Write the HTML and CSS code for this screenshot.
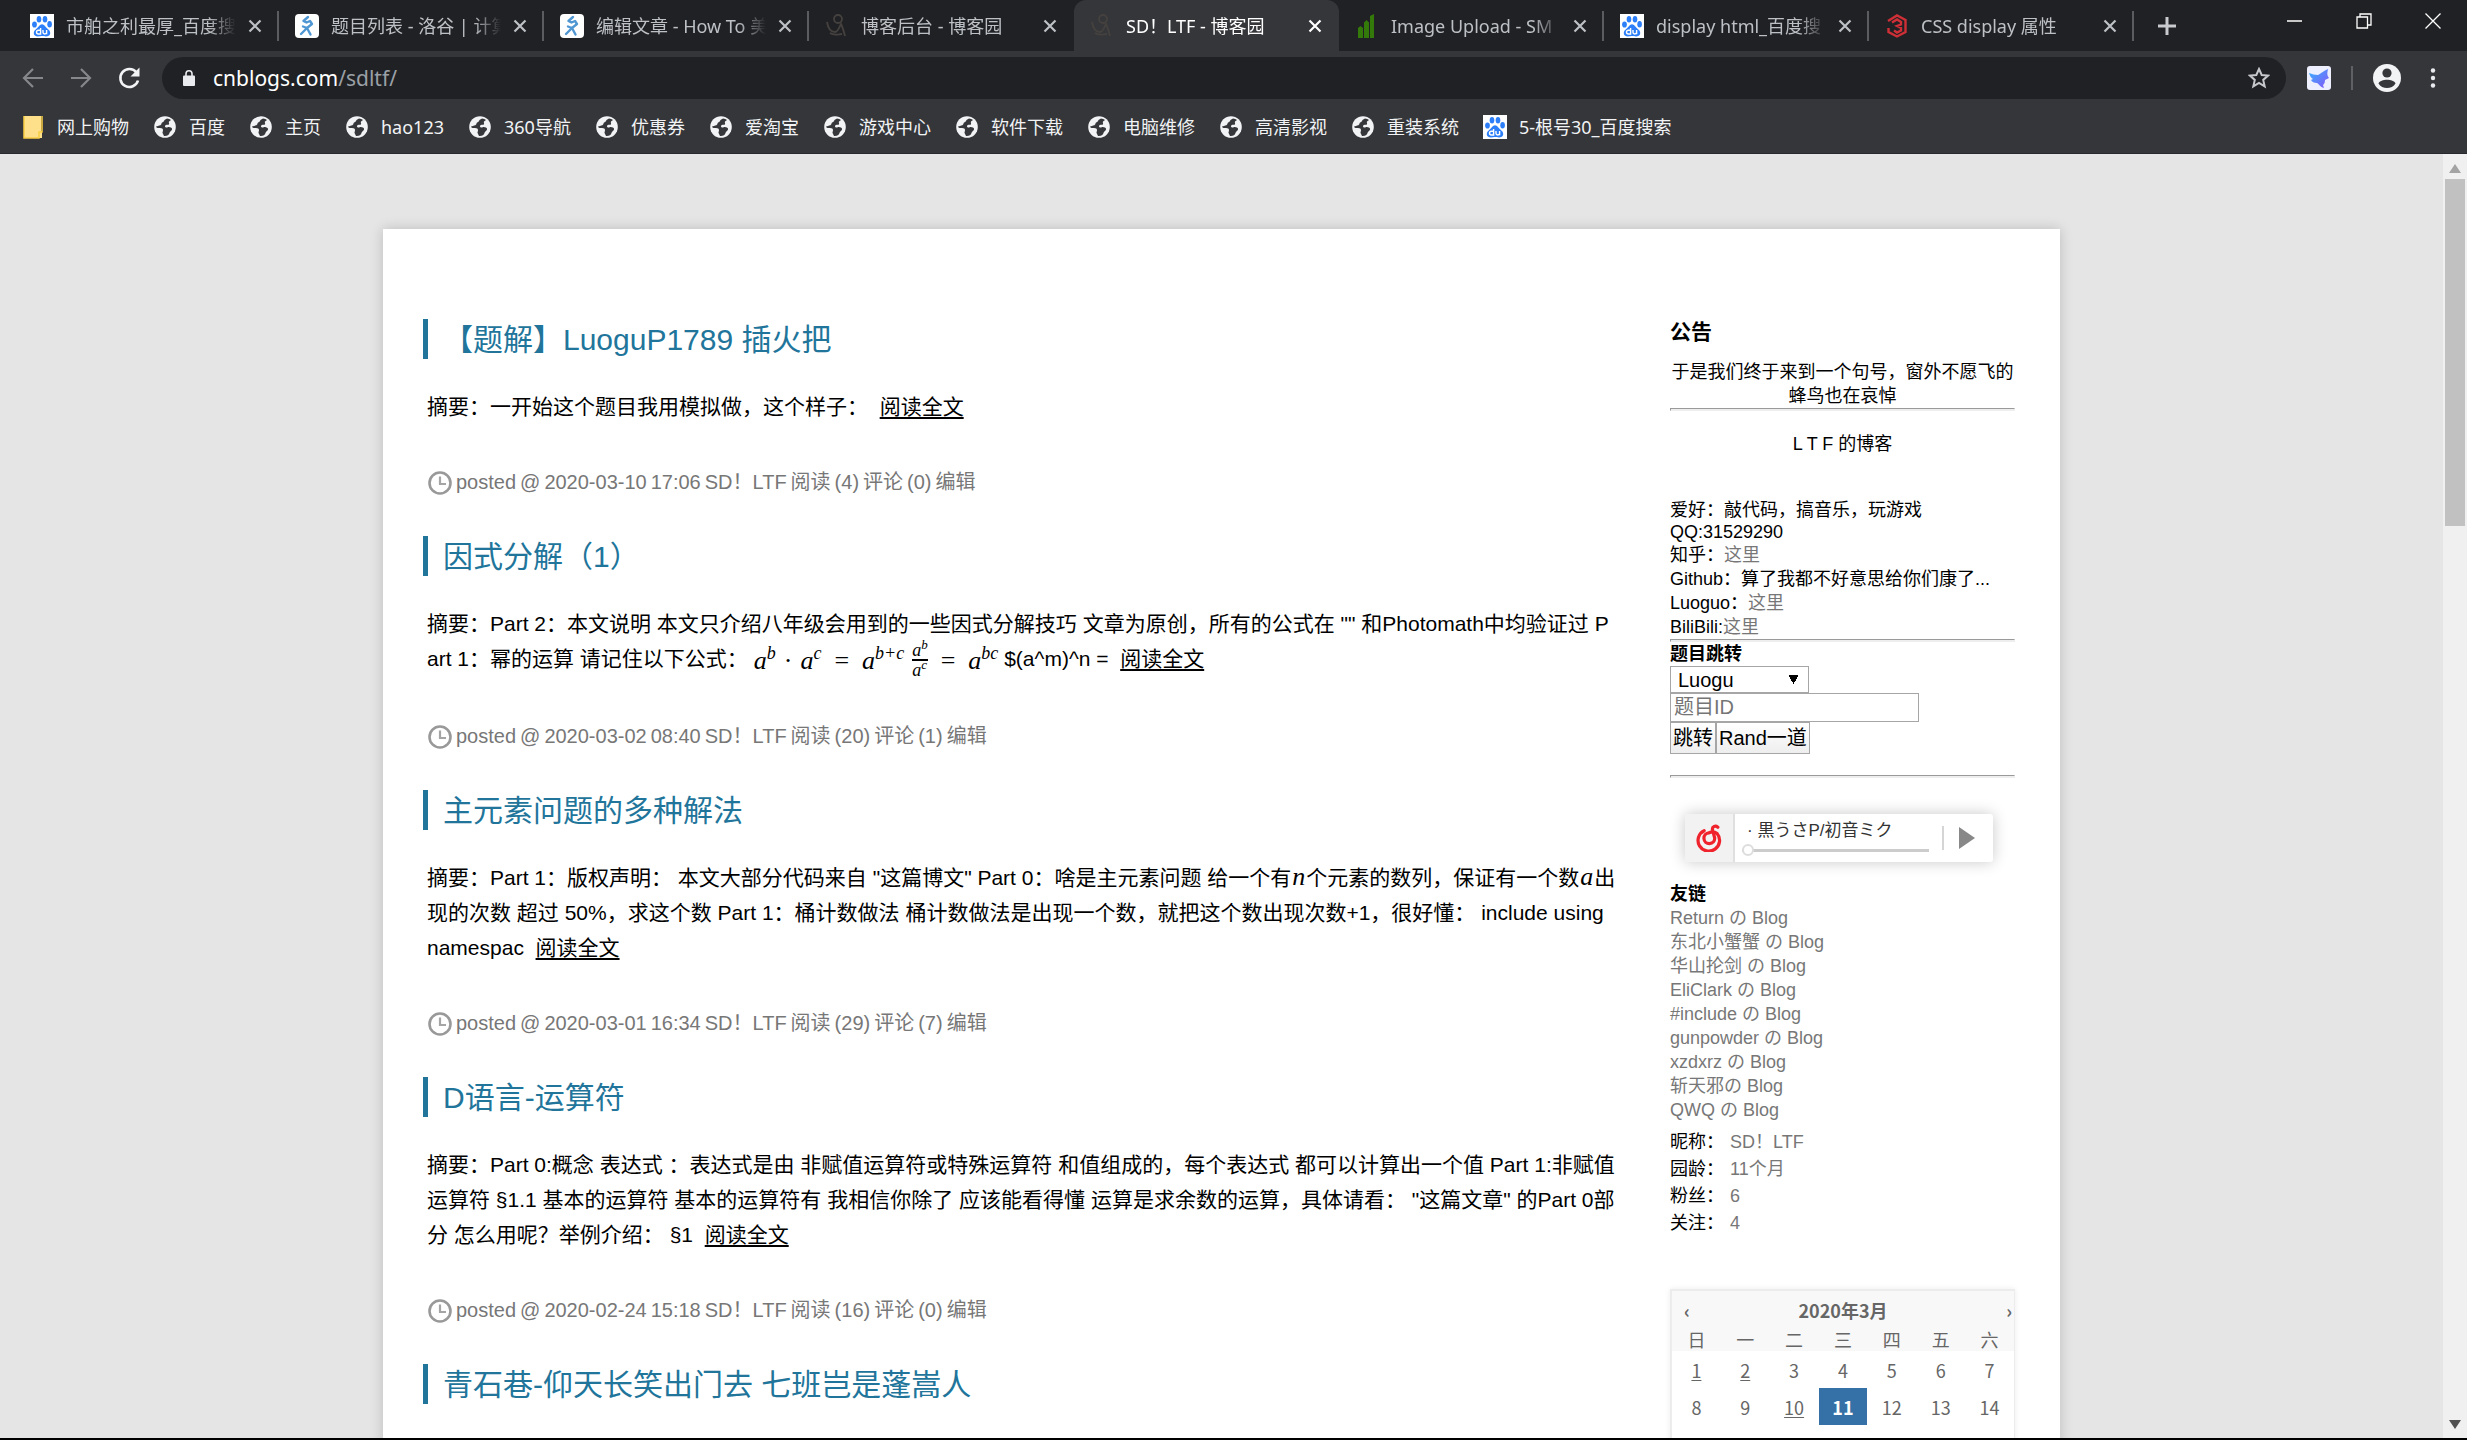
FILE: index.html
```html
<!DOCTYPE html>
<html lang="zh-CN">
<head>
<meta charset="utf-8">
<title>SD！LTF - 博客园</title>
<link rel="stylesheet" href="styles.css">
</head>
<body>
<svg class="sprite" aria-hidden="true">
  <symbol id="baidu" viewBox="0 0 24 24"><rect width="24" height="24" fill="#fff"/><g fill="#2c7ff8"><ellipse cx="4.500" cy="10.500" rx="2.400" ry="3.100"/><ellipse cx="9" cy="5.200" rx="2.300" ry="3.300"/><ellipse cx="15" cy="5.200" rx="2.300" ry="3.300"/><ellipse cx="19.600" cy="10.200" rx="2.300" ry="3.200"/><path d="M12 10.200c2.400 0 3.300 2.400 5 4 1.800 1.600 3.600 2.900 3.200 5.300-.4 2.300-2.200 3-4.200 3-1.700 0-2.600-.4-4-.4s-2.300.4-4 .4c-2 0-3.900-.7-4.200-3-.3-2.400 1.400-3.700 3.200-5.300 1.700-1.600 2.600-4 5-4z"/></g><path d="M10.600 14v6H8.400a1.900 1.900 0 0 1 0-3.800h2.200M13 16v2.600c0 1.800 3.600 1.800 3.600 0V16v4.200" fill="none" stroke="#fff" stroke-width="1.400"/></symbol>
  <symbol id="luogu" viewBox="0 0 24 24"><rect width="24" height="24" rx="4" fill="#fff"/><path d="M13 3 8.500 7l3 1.500 3.500-1.500 2 3-5 4-6 6M8 12.500l4 1.500 3.500 6.500" fill="none" stroke="#4f97d3" stroke-width="2.400" stroke-linecap="round" stroke-linejoin="round"/></symbol>
  <symbol id="cnblogs" viewBox="0 0 24 24"><g fill="none" stroke="#45413f" stroke-width="1.800"><circle cx="13" cy="5" r="4"/><path d="M2 8c1 6 4 10 8 10 3 0 4-4 6-8 2 4 3 8 4 12M5 19c4 3 9 1 12 1"/></g></symbol>
  <symbol id="bars" viewBox="0 0 24 24"><path d="M3 24V14l2.500-2 2.500 2v10zM9 24V8.500L11.500 6 14 8.500V24zM15 24V2l4-2v24z" fill="#347a0b"/></symbol>
  <symbol id="cssicon" viewBox="0 0 24 24"><path d="M3 7l9-5.500 8.500 4.500v12L12 22.500 3.500 18v-4M7 8.500l5-3 4 2.500v2.500l-4 1.500 4 2v2.500L12 18.500l-3-2" fill="none" stroke="#cf2f36" stroke-width="2.400"/></symbol>
  <symbol id="globe" viewBox="0 0 24 24"><circle cx="12" cy="12" r="10.800" fill="#f1f3f4"/><path d="M14 3.500c-1 1-2.500 1-3 2.500-.4 1.200-2.500 1-2.500 2.500S6.500 10.500 5 11l-2 .500c.5 2 2.500 1.500 4 1.500 2 0 3 .8 3 2.200 0 1.300-1 2-.2 3.300l1.200 2.500c3 .3 5-1 5.500-3 .3-1.500 2-2 2.500-3.500.5-1.800-1.500-2-3-2.500-1.200-.4-1.500 1-3 .5-1.300-.5-1.500-2 0-2.500 1.200-.4 2.500.3 3-.8.5-1-.6-1.600 0-2.700l2-1.500C17 4.500 15.500 3.500 14 3.500z" fill="#36373b"/></symbol>
  <symbol id="close" viewBox="0 0 14 14"><path d="M1.500 1.500l11 11M12.500 1.500l-11 11" stroke="currentColor" stroke-width="2.200"/></symbol>
  <symbol id="clock" viewBox="0 0 24 24"><circle cx="12" cy="12" r="10.500" fill="none" stroke="#999" stroke-width="2.600"/><path d="M12 5.500V13h6" fill="none" stroke="#a5a5a5" stroke-width="2.200"/></symbol>
</svg>

<header class="chrome">
  <div class="tabstrip">
    <nav class="tabs">
      <div class="tab"><svg class="favicon"><use href="#baidu"/></svg><a href="#">市舶之利最厚_百度搜</a><button aria-label="关闭"><svg><use href="#close"/></svg></button></div>
      <div class="tab"><svg class="favicon"><use href="#luogu"/></svg><a href="#">题目列表 - 洛谷 | 计算</a><button aria-label="关闭"><svg><use href="#close"/></svg></button></div>
      <div class="tab"><svg class="favicon"><use href="#luogu"/></svg><a href="#">编辑文章 - How To 美</a><button aria-label="关闭"><svg><use href="#close"/></svg></button></div>
      <div class="tab plain"><svg class="favicon"><use href="#cnblogs"/></svg><a href="#">博客后台 - 博客园</a><button aria-label="关闭"><svg><use href="#close"/></svg></button></div>
      <div class="tab active"><svg class="favicon"><use href="#cnblogs"/></svg><a href="#">SD！LTF - 博客园</a><button aria-label="关闭"><svg><use href="#close"/></svg></button></div>
      <div class="tab"><svg class="favicon"><use href="#bars"/></svg><a href="#">Image Upload - SM</a><button aria-label="关闭"><svg><use href="#close"/></svg></button></div>
      <div class="tab"><svg class="favicon"><use href="#baidu"/></svg><a href="#">display html_百度搜</a><button aria-label="关闭"><svg><use href="#close"/></svg></button></div>
      <div class="tab"><svg class="favicon"><use href="#cssicon"/></svg><a href="#">CSS display 属性</a><button aria-label="关闭"><svg><use href="#close"/></svg></button></div>
    </nav>
    <button class="newtab" aria-label="新标签页"><svg viewBox="0 0 18 18"><path d="M9 0v18M0 9h18" stroke="#c8cacd" stroke-width="3"/></svg></button>
    <div class="wincontrols">
      <button aria-label="最小化"><svg viewBox="0 0 16 16"><path d="M0 8h15" stroke="#fff" stroke-width="1.500"/></svg></button>
      <button aria-label="还原"><svg viewBox="0 0 16 16"><path d="M1 4h10.500v11H1zM4 4V1h11v11h-3.500" fill="none" stroke="#fff" stroke-width="1.300"/></svg></button>
      <button aria-label="关闭窗口"><svg viewBox="0 0 16 16"><path d="M.5.5l15 15M15.500.5l-15 15" stroke="#fff" stroke-width="1.300"/></svg></button>
    </div>
  </div>

  <div class="toolbar">
    <button aria-label="后退"><svg viewBox="0 0 24 24"><path d="M22 12H3M12 3l-9 9 9 9" fill="none" stroke="#85878a" stroke-width="2.200"/></svg></button>
    <button aria-label="前进"><svg viewBox="0 0 24 24"><path d="M2 12h19M12 3l9 9-9 9" fill="none" stroke="#85878a" stroke-width="2.200"/></svg></button>
    <button class="reload" aria-label="刷新"><svg viewBox="0 0 24 24"><path d="M19.500 6.500a9 9 0 1 0 1.500 8" fill="none" stroke="#f1f3f4" stroke-width="2.600"/><path d="M22.500 1.500v9h-9z" fill="#f1f3f4"/></svg></button>
    <div class="omnibox">
      <svg class="lock" viewBox="0 0 12 16"><rect y="5.500" width="12" height="10.500" rx="1" fill="#e8eaed"/><path d="M3 6V3.800a3 3 0 0 1 6 0V6" fill="none" stroke="#e8eaed" stroke-width="1.600"/></svg>
      <a href="#">cnblogs.com<span>/sdltf/</span></a>
      <button aria-label="收藏"><svg viewBox="0 0 22 22"><path d="M11 2l2.700 6 6.300.6-4.800 4.300 1.500 6.500L11 16l-5.700 3.400 1.500-6.500L2 8.600 8.300 8z" fill="none" stroke="#c6c8cb" stroke-width="2"/></svg></button>
    </div>
    <button class="ext" aria-label="扩展程序"><svg viewBox="0 0 24 24"><defs><linearGradient id="wing" x2="1" y2="1"><stop stop-color="#35b2ff"/><stop offset="1" stop-color="#8a55f7"/></linearGradient></defs><rect width="24" height="24" rx="3" fill="#eef0ff"/><path d="M2 7c3 1 6 2 9 2 2-1 5-4 10-6-1 5-1 6 1 9l-4 2c0 3-1 4-2 5l1 3c-4-1-5-4-7-5-3 0-5-1-6-3l2-1C4 12 3 10 2 7z" fill="url(#wing)"/></svg></button>
    <span class="divider"></span>
    <button class="avatar" aria-label="用户"><svg viewBox="0 0 28 28"><circle cx="14" cy="14" r="14" fill="#f1f3f4"/><circle cx="14" cy="9" r="4.600" fill="#35363a"/><path d="M5.500 19.500c2-5 15-5 17 0-3.500 6-13.500 6-17 0z" fill="#35363a"/></svg></button>
    <button class="menu" aria-label="菜单"><svg viewBox="0 0 8 24"><g fill="#e8eaed"><circle cx="4" cy="4.500" r="2.200"/><circle cx="4" cy="12" r="2.200"/><circle cx="4" cy="19.500" r="2.200"/></g></svg></button>
  </div>

  <nav class="bookmarks">
    <a href="#"><svg viewBox="0 0 24 24"><path d="M3 1h17v15h1v7H3z" fill="#fee08a"/><path d="M3 1v22h15v-6h3V1" fill="none" stroke="#f7ce46" stroke-width="1.500"/></svg>网上购物</a>
    <a href="#"><svg><use href="#globe"/></svg>百度</a>
    <a href="#"><svg><use href="#globe"/></svg>主页</a>
    <a href="#"><svg><use href="#globe"/></svg>hao123</a>
    <a href="#"><svg><use href="#globe"/></svg>360导航</a>
    <a href="#"><svg><use href="#globe"/></svg>优惠券</a>
    <a href="#"><svg><use href="#globe"/></svg>爱淘宝</a>
    <a href="#"><svg><use href="#globe"/></svg>游戏中心</a>
    <a href="#"><svg><use href="#globe"/></svg>软件下载</a>
    <a href="#"><svg><use href="#globe"/></svg>电脑维修</a>
    <a href="#"><svg><use href="#globe"/></svg>高清影视</a>
    <a href="#"><svg><use href="#globe"/></svg>重装系统</a>
    <a href="#"><svg><use href="#baidu"/></svg>5-根号30_百度搜索</a>
  </nav>
</header>

<div class="viewport">
  <div class="page">
    <div class="card">
      <main class="posts">
        <article>
          <h2><a href="#">【题解】LuoguP1789 插火把</a></h2>
          <p>摘要：一开始这个题目我用模拟做，这个样子：&nbsp; <a href="#">阅读全文</a></p>
          <footer><svg><use href="#clock"/></svg><span>posted</span><span>@</span><span>2020-03-10</span><span>17:06</span><span>SD！LTF</span><span>阅读</span><span>(4)</span><span>评论</span><span>(0)</span><a href="#">编辑</a></footer>
        </article>
        <article>
          <h2><a href="#">因式分解（1）</a></h2>
          <p>摘要：Part 2：本文说明 本文只介绍八年级会用到的一些因式分解技巧 文章为原创，所有的公式在 "" 和Photomath中均验证过 Part 1：幂的运算 请记住以下公式： <span class="math"><span><i>a</i><sup>b</sup></span><span>·</span><span><i>a</i><sup>c</sup></span><span class="op">=</span><span><i>a</i><sup>b+c</sup></span><span class="frac"><span><i>a</i><sup>b</sup></span><span><i>a</i><sup>c</sup></span></span><span class="op">=</span><span><i>a</i><sup>bc</sup></span></span> $(a^m)^n =&nbsp; <a href="#">阅读全文</a></p>
          <footer><svg><use href="#clock"/></svg><span>posted</span><span>@</span><span>2020-03-02</span><span>08:40</span><span>SD！LTF</span><span>阅读</span><span>(20)</span><span>评论</span><span>(1)</span><a href="#">编辑</a></footer>
        </article>
        <article>
          <h2><a href="#">主元素问题的多种解法</a></h2>
          <p>摘要：Part 1：版权声明： 本文大部分代码来自 "这篇博文" Part 0：啥是主元素问题 给一个有<i class="var">n</i>个元素的数列，保证有一个数<i class="var">a</i>出现的次数 超过 50%，求这个数 Part 1：桶计数做法 桶计数做法是出现一个数，就把这个数出现次数+1，很好懂： include using <br>namespac&nbsp; <a href="#">阅读全文</a></p>
          <footer><svg><use href="#clock"/></svg><span>posted</span><span>@</span><span>2020-03-01</span><span>16:34</span><span>SD！LTF</span><span>阅读</span><span>(29)</span><span>评论</span><span>(7)</span><a href="#">编辑</a></footer>
        </article>
        <article>
          <h2><a href="#">D语言-运算符</a></h2>
          <p>摘要：Part 0:概念 表达式 ：表达式是由 非赋值运算符或特殊运算符 和值组成的，每个表达式 都可以计算出一个值 Part 1:非赋值运算符 §1.1 基本的运算符 基本的运算符有 我相信你除了 应该能看得懂 运算是求余数的运算，具体请看： "这篇文章" 的Part 0部分 怎么用呢？举例介绍： §1&nbsp; <a href="#">阅读全文</a></p>
          <footer><svg><use href="#clock"/></svg><span>posted</span><span>@</span><span>2020-02-24</span><span>15:18</span><span>SD！LTF</span><span>阅读</span><span>(16)</span><span>评论</span><span>(0)</span><a href="#">编辑</a></footer>
        </article>
        <article>
          <h2><a href="#">青石巷-仰天长笑出门去 七班岂是蓬嵩人</a></h2>
        </article>
      </main>

      <aside class="side">
        <h3>公告</h3>
        <p class="quote">于是我们终于来到一个句号，窗外不愿飞的蜂鸟也在哀悼</p>
        <hr>
        <p class="blogname">L T F 的博客</p>
        <ul class="about">
          <li>爱好：敲代码，搞音乐，玩游戏</li>
          <li class="latin">QQ:31529290</li>
          <li>知乎：<a href="#">这里</a></li>
          <li>Github：算了我都不好意思给你们康了...</li>
          <li>Luoguo：<a href="#">这里</a></li>
          <li>BiliBili:<a href="#">这里</a></li>
        </ul>
        <hr>
        <form class="jump">
          <h4><label for="oj">题目跳转</label></h4>
          <select id="oj"><option>Luogu</option></select>
          <input type="text" placeholder="题目ID" aria-label="题目ID">
          <div class="buttons"><button type="button">跳转</button><button type="button">Rand一道</button></div>
        </form>
        <hr>
        <div class="player">
          <div class="logo"><svg viewBox="0 0 26 26"><path d="M8.500 6.200A10 10 0 1 0 20.500 8.800C18.500 7.200 15.500 7 13 8.200a5 5 0 1 0 5.300 4.800L16.200 5c-.4-2.800 2.800-3.800 5-2" fill="none" stroke="#f0222c" stroke-width="3" stroke-linecap="round"/></svg></div>
          <div class="track"><span>· 黒うさP/初音ミク</span><input type="range" value="0" aria-label="进度"></div>
          <button aria-label="播放"><svg viewBox="0 0 16 22"><path d="M0 0l16 11L0 22z" fill="#888"/></svg></button>
        </div>
        <h4>友链</h4>
        <ul class="links">
          <li><a href="#">Return の Blog</a></li>
          <li><a href="#">东北小蟹蟹 の Blog</a></li>
          <li><a href="#">华山抡剑 の Blog</a></li>
          <li><a href="#">EliClark の Blog</a></li>
          <li><a href="#">#include の Blog</a></li>
          <li><a href="#">gunpowder の Blog</a></li>
          <li><a href="#">xzdxrz の Blog</a></li>
          <li><a href="#">斩天邪の Blog</a></li>
          <li><a href="#">QWQ の Blog</a></li>
        </ul>
        <ul class="profile">
          <li>昵称：<a href="#">SD！LTF</a></li>
          <li>园龄：<a href="#">11个月</a></li>
          <li>粉丝：<a href="#">6</a></li>
          <li>关注：<a href="#">4</a></li>
        </ul>
        <div class="calendar">
          <div class="month"><a href="#" aria-label="上个月">‹</a><b>2020年3月</b><a href="#" aria-label="下个月">›</a></div>
          <table>
            <thead><tr><th>日</th><th>一</th><th>二</th><th>三</th><th>四</th><th>五</th><th>六</th></tr></thead>
            <tbody>
              <tr><td><a href="#">1</a></td><td><a href="#">2</a></td><td>3</td><td>4</td><td>5</td><td>6</td><td>7</td></tr>
              <tr><td>8</td><td>9</td><td><a href="#">10</a></td><td class="today">11</td><td>12</td><td>13</td><td>14</td></tr>
            </tbody>
          </table>
        </div>
      </aside>
    </div>
  </div>
  <div class="scrollbar"><svg viewBox="0 0 12 9"><path d="M6 0l6 9H0z" fill="#a3a3a3"/></svg><span></span><svg viewBox="0 0 12 9"><path d="M0 0h12L6 9z" fill="#505050"/></svg></div>
</div>
</body>
</html>
```
FILE: styles.css
```css
* { box-sizing: border-box; margin: 0; padding: 0; }
html { text-spacing-trim: space-all; }
body {
  height: 100vh;
  display: flex;
  flex-direction: column;
  overflow: hidden;
  border-bottom: 2px solid #000;
  font: 18px/24px "Liberation Sans", "Noto Sans CJK SC", sans-serif;
  color: #000;
}
a { color: inherit; text-decoration: none; }
button { border: 0; background: none; font: inherit; color: inherit; }
ul { list-style: none; }
svg { display: block; flex: none; }
.sprite { position: absolute; width: 0; height: 0; }

/* browser frame */
.chrome {
  flex: none;
  background: #35363a;
  border-bottom: 1px solid #28292c;
  font-family: "Noto Sans", "Noto Sans CJK SC", sans-serif;
}
.tabstrip { display: flex; height: 51px; background: #202124; padding-left: 14px; }
.tabs { display: flex; flex: 0 1 2120px; min-width: 0; }
.tab {
  flex: 1 1 0;
  min-width: 0;
  display: flex;
  align-items: center;
  gap: 12px;
  padding: 0 17px 0 16px;
  color: #bdc1c6;
  background: linear-gradient(#5a5c60, #5a5c60) right center / 2px 30px no-repeat;
}
.tab a {
  flex: 1;
  min-width: 0;
  overflow: hidden;
  white-space: nowrap;
  mask-image: linear-gradient(to right, #000 84%, transparent);
}
.tab button { width: 14px; height: 14px; }
.tab button svg { width: 14px; height: 14px; }
.tab.plain { background: none; }
.tab.active { background: #35363a; border-radius: 12px 12px 0 0; color: #fff; }
.favicon { width: 24px; height: 24px; }
.newtab { padding: 0 24px; }
.newtab svg { width: 18px; height: 18px; }
.wincontrols { display: flex; align-items: flex-start; margin-left: auto; }
.wincontrols button { width: 69px; padding: 13px 27px; }
.wincontrols svg { width: 16px; height: 16px; }

.toolbar { display: flex; align-items: center; height: 54px; padding: 0 22px 0 21px; }
.toolbar > button { margin-right: 24px; }
.toolbar > button svg { width: 24px; height: 24px; }
.toolbar > .reload { margin-right: 21px; }
.omnibox {
  flex: 1;
  display: flex;
  align-items: center;
  height: 42px;
  margin-right: 21px;
  padding: 0 16px 0 21px;
  border-radius: 21px;
  background: #202124;
  font-size: 21px;
  color: #fff;
}
.omnibox .lock { width: 12px; height: 16px; margin-right: 18px; }
.omnibox a { flex: 1; }
.omnibox span { color: #9aa0a6; }
.omnibox button svg { width: 22px; height: 22px; }
.toolbar > .ext { margin-right: 20px; }
.divider { width: 2px; height: 24px; background: #5f6064; margin-right: 20px; }
.toolbar > .avatar svg { width: 28px; height: 28px; }
.toolbar > .avatar { margin-right: 28px; }
.toolbar > .menu { margin-right: 8px; }
.toolbar > .menu svg { width: 8px; }

.bookmarks { display: flex; align-items: center; gap: 24px; height: 48px; padding: 0 21px 5px; color: #f1f3f4; }
.bookmarks a { display: flex; align-items: center; gap: 12px; white-space: nowrap; }
.bookmarks svg { width: 24px; height: 24px; }

/* page area */
.viewport { flex: 1; min-height: 0; display: flex; background: #e5e5e5; }
.page { flex: 1; min-width: 0; padding: 75px 383px 0; overflow: hidden; }
.card {
  display: flex;
  justify-content: space-between;
  padding: 90px 45px 60px 40px;
  background: #fff;
  box-shadow: 0 0 12px rgba(0, 0, 0, .18);
}
.scrollbar {
  flex: none;
  width: 24px;
  display: flex;
  flex-direction: column;
  align-items: center;
  padding: 10px 0 9px;
  background: #f0f0f0;
}
.scrollbar svg { width: 12px; height: 9px; }
.scrollbar span { width: 20px; height: 347px; margin: 6px 0 auto; background: #c1c1c1; }

/* posts */
.posts { flex: 0 1 1195px; min-width: 0; }
.posts h2 {
  border-left: 5px solid #21759b;
  padding: 2px 0 0 15px;
  font-size: 30px;
  font-weight: 400;
  line-height: 38px;
  color: #21759b;
}
.posts p {
  margin: 30px 0 43px;
  padding-left: 4px;
  font-size: 21px;
  line-height: 35px;
  word-break: break-all;
}
.posts p a { text-decoration: underline; text-decoration-thickness: 2px; text-underline-offset: 3px; }
.posts footer {
  display: flex;
  align-items: center;
  gap: 4px;
  margin-bottom: 38px;
  padding-left: 5px;
  font-size: 20px;
  line-height: 31px;
  color: #777;
}
.posts footer svg { width: 24px; height: 24px; }
.math { display: inline-flex; align-items: center; gap: 8px; height: 36px; vertical-align: middle; font-family: "Liberation Serif", serif; font-size: 26px; }
.math sup { font-size: 18px; font-style: italic; line-height: 0; }
.op { padding: 0 5px; }
.frac { display: flex; flex-direction: column; font-size: 18px; line-height: 18px; }
.frac span + span { border-top: 2px solid #000; }
.math .frac sup { font-size: 13px; }
.var { padding: 0 1px; font-family: "Liberation Serif", serif; font-size: 26px; line-height: 24px; }

/* sidebar */
.side { flex: none; width: 345px; }
.side a { color: #777; }
.side h3 { font-size: 21px; line-height: 26px; margin-bottom: 15px; }
.side h4 { font-size: 18px; line-height: 24px; }
.side hr { height: 3px; border: 1px solid; border-color: #9a9a9a #eee #eee #9a9a9a; background: #eee; }
.quote { text-align: center; }
.blogname { text-align: center; margin: 21px 0 42px; }
.about .latin { line-height: 21px; }
.jump { padding-bottom: 21px; }
.jump select, .jump input, .jump button {
  display: block;
  border: 1px solid #a6a6a6;
  background: #fff;
  font: 20px/24px "Liberation Sans", "Noto Sans CJK SC", sans-serif;
  color: #000;
}
.jump select {
  appearance: none;
  width: 139px;
  height: 27px;
  padding-left: 7px;
  background: #fff conic-gradient(from -30deg at 50% 100%, #000 60deg, transparent 0) no-repeat right 10px center / 9px 9px;
}
.jump input { width: 249px; height: 29px; padding: 0 3px; }
.jump input::placeholder { color: #757575; }
.buttons { display: flex; }
.jump button { height: 32px; padding: 0 2px; background: linear-gradient(#fff, #eee); }
.player {
  display: flex;
  align-items: center;
  height: 48px;
  margin: 36px 22px 20px 15px;
  border-radius: 3px;
  box-shadow: 0 0 15px rgba(0, 0, 0, .22);
}
.logo { display: flex; align-items: center; justify-content: center; width: 50px; height: 48px; background: #f2f2f2; border-right: 2px solid #e0e0e0; }
.logo svg { width: 28px; height: 28px; }
.track { flex: 1; padding: 0 13px 0 7px; font-size: 17px; line-height: 24px; color: #333; }
.track span { display: block; padding-left: 5px; }
.track input { display: block; appearance: none; width: 100%; height: 14px; background: linear-gradient(#ccc, #ccc) center / 100% 3px no-repeat; }
.track input::-webkit-slider-thumb { appearance: none; width: 12px; height: 12px; border: 2px solid #ddd; border-radius: 50%; background: #fff; }
.player button { height: 24px; padding: 0 18px 0 15px; border-left: 2px solid #d5d5d5; }
.player button svg { width: 16px; height: 22px; }
.profile { margin: 7px 0 52px; line-height: 27px; }
.profile a { padding-left: 6px; }

.calendar {
  padding-bottom: 24px;
  border: 2px solid #ececec;
  border-width: 2px 1px 0 2px;
  box-shadow: 0 0 6px rgba(0, 0, 0, .08);
  font-family: "Noto Sans CJK SC", sans-serif;
  color: #666;
}
.month { display: flex; align-items: center; height: 36px; padding-top: 2px; background: #f8f8f8; }
.month b { flex: 1; text-align: center; }
.month a { width: 32px; padding-right: 2px; text-align: center; font-weight: 700; }
.month b + a { text-align: right; }
.calendar a { color: #666; }
.calendar table { width: 100%; table-layout: fixed; border-collapse: collapse; }
.calendar th { height: 24px; font-weight: 400; background: #f8f8f8; }
.calendar td { height: 37px; text-align: center; }
.calendar td a { text-decoration: underline; text-underline-offset: 2px; }
.calendar .today { background: #3571a6; color: #fff; font-weight: 700; }
```
